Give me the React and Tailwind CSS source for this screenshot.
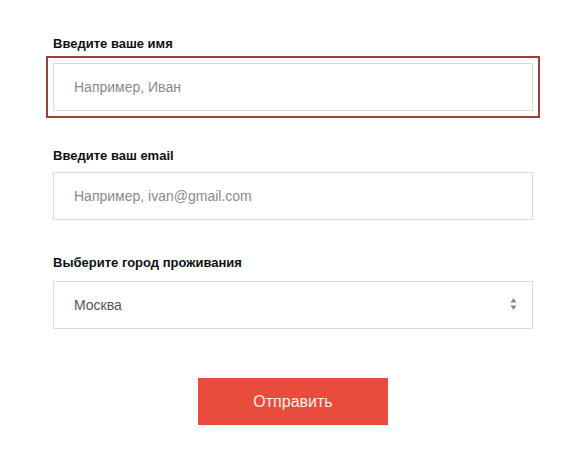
import React from 'react';

const fieldClass =
  'block w-full h-[48px] border border-[#dcdcdc] bg-white px-5 text-[14px] text-[#555] placeholder:text-[#8a8a8a]';

const App = () => {
  return (
    <div
      className="min-h-screen w-[582px] bg-white pt-[36px] pl-[53px]"
      style={{ fontFamily: '"Liberation Sans", Arial, sans-serif' }}
    >
      <form className="w-[480px]" onSubmit={(e) => e.preventDefault()}>
        {/* Name */}
        <label className="block text-[13px] leading-4 font-bold text-[#111] mb-[11px]">
          Введите ваше имя
        </label>
        <input
          className={`${fieldClass} outline-solid outline-2 outline-offset-[5px] outline-[#9f3f3b]`}
          placeholder="Например, Иван"
        />

        {/* Email */}
        <label className="block text-[13px] leading-4 font-bold text-[#111] mt-[37px] mb-[8px]">
          Введите ваш email
        </label>
        <input className={`${fieldClass} outline-none`} placeholder="Например, ivan@gmail.com" />

        {/* City */}
        <label className="block text-[13px] leading-4 font-bold text-[#111] mt-[35px] mb-[10px]">
          Выберите город проживания
        </label>
        <div className="relative">
          <select className={`${fieldClass} outline-none appearance-none h-[46px]`} defaultValue="Москва">
            <option>Москва</option>
            <option>Санкт-Петербург</option>
            <option>Казань</option>
          </select>
          {/* Up/down arrows */}
          <svg
            className="absolute right-[16px] top-[16px] pointer-events-none"
            width="7"
            height="14"
            viewBox="0 0 7 14"
          >
            <path d="M3.5 1 L6.5 5.5 L0.5 5.5 Z" fill="#8a8a8a" />
            <path d="M3.5 13 L6.5 8.5 L0.5 8.5 Z" fill="#8a8a8a" />
          </svg>
        </div>

        <div className="flex justify-center mt-[49px]">
          <button
            type="submit"
            className="w-[190px] h-[47px] bg-[#e74c3c] text-[16px] text-[#fdf1ef]"
          >
            Отправить
          </button>
        </div>
      </form>
    </div>
  );
};

export default App;
